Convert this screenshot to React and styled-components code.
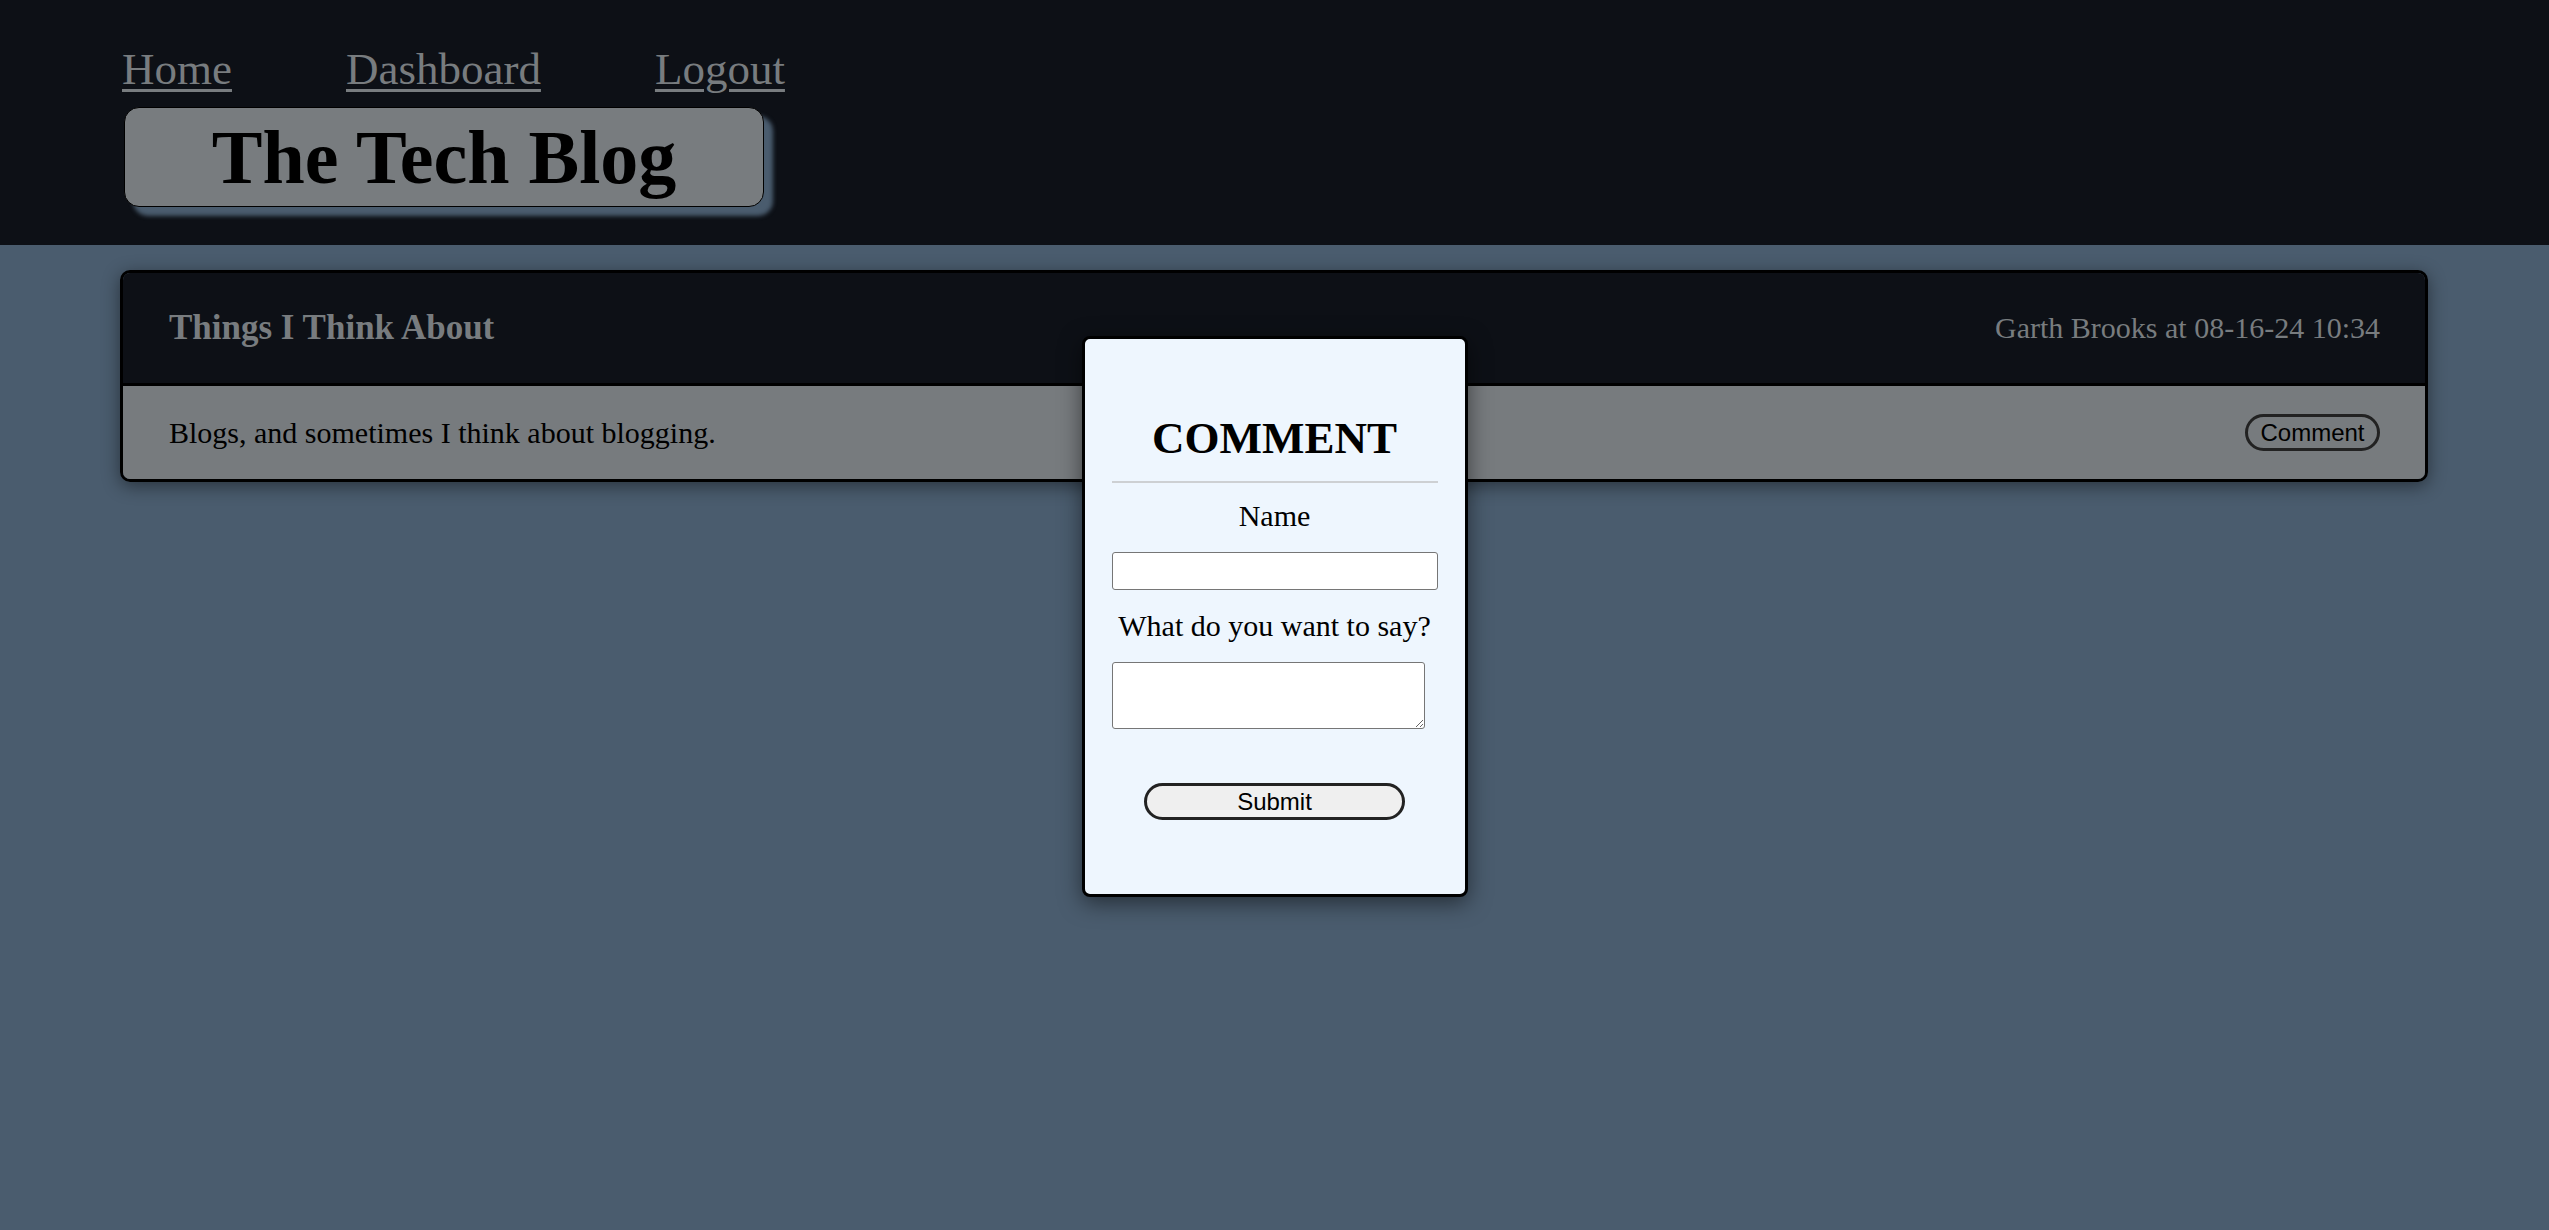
import React from "react";
import styled, { createGlobalStyle } from "styled-components";

const GlobalStyle = createGlobalStyle`
  html, body {
    margin: 0;
    padding: 0;
    background: #4a5c6e;
    font-family: "Liberation Serif", "Times New Roman", serif;
  }
`;

const Page = styled.div`
  position: relative;
  min-height: 100vh;
  background: #4a5c6e;
`;

const Header = styled.header`
  box-sizing: border-box;
  height: 245px;
  padding: 47px 120px 0;
  background: #0d1016;
`;

const Nav = styled.nav`
  display: flex;
  gap: 114px;
  padding-left: 2px;
`;

const NavLink = styled.a`
  font-size: 45px;
  line-height: 45px;
  color: #787c7f;
  text-decoration: underline;
  text-decoration-thickness: 3px;
  text-underline-offset: 5px;
  cursor: pointer;
`;

const TitleBox = styled.h1`
  box-sizing: border-box;
  width: 640px;
  height: 100px;
  margin: 15px 0 0 4px;
  border: 1px solid #000;
  border-radius: 15px;
  background: #787c7f;
  box-shadow: 9px 9px 4px #4a5c6e;
  font-size: 76px;
  line-height: 98px;
  font-weight: 700;
  text-align: center;
  color: #000;
`;

const Main = styled.main`
  padding: 25px 121px 0 120px;
`;

const Card = styled.section`
  border: 3px solid #000;
  border-radius: 10px;
  overflow: hidden;
  box-shadow: 0 4px 18px rgba(0, 0, 0, 0.45);
`;

const CardHead = styled.div`
  display: flex;
  align-items: center;
  justify-content: space-between;
  height: 110px;
  padding: 0 45px 0 46px;
  background: #0d1016;
  border-bottom: 3px solid #000;
  color: #787c7f;
`;

const PostTitle = styled.h2`
  margin: 0;
  font-size: 35px;
  font-weight: 700;
`;

const Meta = styled.span`
  font-size: 30px;
`;

const CardBody = styled.div`
  display: flex;
  align-items: center;
  justify-content: space-between;
  height: 93px;
  padding: 0 45px 0 46px;
  background: #777b7e;
  font-size: 30px;
  color: #000;
`;

const PillButton = styled.button`
  box-sizing: border-box;
  width: ${(p) => p.$width}px;
  height: ${(p) => p.$height}px;
  padding: 0;
  border: 3px solid #222;
  border-radius: 999px;
  background: ${(p) => p.$bg};
  font-family: "Liberation Sans", Arial, sans-serif;
  font-size: 24px;
  color: #000;
  cursor: pointer;
`;

const Modal = styled.div`
  position: absolute;
  top: 336px;
  left: 50%;
  transform: translateX(-50%);
  box-sizing: border-box;
  width: 386px;
  height: 561px;
  padding: 0 27px;
  border: 3px solid #000;
  border-radius: 8px;
  background: #eef6fe;
  box-shadow: 0 6px 22px rgba(0, 0, 0, 0.5);
  text-align: center;
`;

const ModalTitle = styled.h2`
  margin: 73px 0 0;
  font-size: 45px;
  line-height: 52px;
  font-weight: 700;
`;

const Rule = styled.hr`
  margin: 17px 0 0;
  border: none;
  border-top: 2px solid #cdd0d3;
`;

const Label = styled.label`
  display: block;
  margin-top: ${(p) => p.$top}px;
  font-size: 30px;
  line-height: 34px;
  color: #000;
`;

const TextInput = styled.input`
  display: block;
  box-sizing: border-box;
  width: 100%;
  height: 38px;
  margin: 19px 0 0;
  border: 1px solid #767676;
  border-radius: 3px;
  background: #fff;
`;

const TextArea = styled.textarea`
  display: block;
  box-sizing: border-box;
  width: 313px;
  height: 67px;
  margin: 19px 0 0;
  border: 1px solid #767676;
  border-radius: 3px;
  background: #fff;
`;

const SubmitRow = styled.div`
  display: flex;
  justify-content: center;
  margin-top: 54px;
`;

export default function App() {
  return (
    <Page>
      <GlobalStyle />
      <Header>
        <Nav>
          <NavLink>Home</NavLink>
          <NavLink>Dashboard</NavLink>
          <NavLink>Logout</NavLink>
        </Nav>
        <TitleBox>The Tech Blog</TitleBox>
      </Header>
      <Main>
        <Card>
          <CardHead>
            <PostTitle>Things I Think About</PostTitle>
            <Meta>Garth Brooks at 08-16-24 10:34</Meta>
          </CardHead>
          <CardBody>
            <span>Blogs, and sometimes I think about blogging.</span>
            <PillButton $width={135} $height={37} $bg="transparent">
              Comment
            </PillButton>
          </CardBody>
        </Card>
      </Main>
      <Modal>
        <ModalTitle>COMMENT</ModalTitle>
        <Rule />
        <Label $top={16}>Name</Label>
        <TextInput type="text" />
        <Label $top={19}>What do you want to say?</Label>
        <TextArea />
        <SubmitRow>
          <PillButton $width={261} $height={37} $bg="#efefef">
            Submit
          </PillButton>
        </SubmitRow>
      </Modal>
    </Page>
  );
}
